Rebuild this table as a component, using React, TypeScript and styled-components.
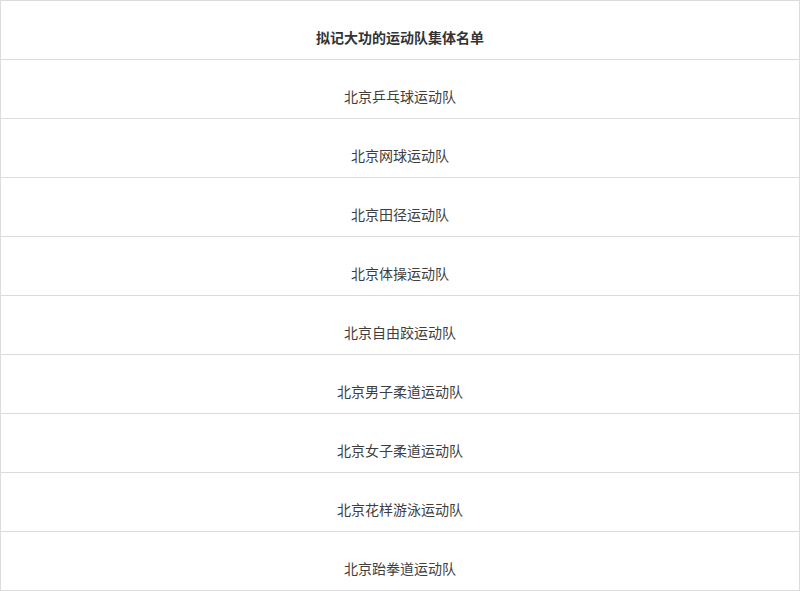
import React from "react";
import { styled, createGlobalStyle } from "styled-components";

const teams: string[] = [
  "北京乒乓球运动队",
  "北京网球运动队",
  "北京田径运动队",
  "北京体操运动队",
  "北京自由跤运动队",
  "北京男子柔道运动队",
  "北京女子柔道运动队",
  "北京花样游泳运动队",
  "北京跆拳道运动队",
];

const App = () => {
  return (
    <>
      <GlobalStyle />
      <StTable>
        <thead>
          <tr>
            <StCell as="th" $head>
              拟记大功的运动队集体名单
            </StCell>
          </tr>
        </thead>
        <tbody>
          {teams.map((name) => {
            return (
              <tr key={name}>
                <StCell>{name}</StCell>
              </tr>
            );
          })}
        </tbody>
      </StTable>
    </>
  );
};

const GlobalStyle = createGlobalStyle`
  html, body {
    margin: 0;
    padding: 0;
    background: #ffffff;
  }
  body {
    font-family: "Noto Sans CJK SC", "Liberation Sans", sans-serif;
    color: #333333;
  }
`;

const StTable = styled.table`
  width: 800px;
  border-collapse: collapse;
  table-layout: fixed;
`;

const StCell = styled.td<{ $head?: boolean }>`
  height: 58px;
  box-sizing: border-box;
  padding: 26px 10px 12px;
  border: 1px solid #dcdcdc;
  text-align: center;
  vertical-align: top;
  font-size: 14px;
  line-height: 20px;
  font-weight: ${({ $head }) => ($head ? 700 : 400)};
  color: ${({ $head }) => ($head ? "#333333" : "#3e3e3e")};
`;

export default App;
